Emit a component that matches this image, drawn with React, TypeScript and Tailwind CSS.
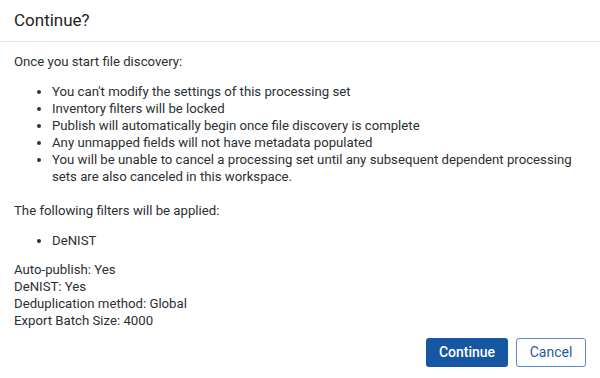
export default function App() {
  const effects = [
    "You can't modify the settings of this processing set",
    'Inventory filters will be locked',
    'Publish will automatically begin once file discovery is complete',
    'Any unmapped fields will not have metadata populated',
    'You will be unable to cancel a processing set until any subsequent dependent processing sets are also canceled in this workspace.',
  ]

  return (
    <div className="flex h-[378px] w-[600px] flex-col bg-white font-['Roboto',sans-serif] text-[#2b2f33]">
      <header className="flex h-[42px] shrink-0 items-center border-b border-[#e3e8ec] px-[14px]">
        <h1 className="text-[17px] leading-none text-[#222]">Continue?</h1>
      </header>

      <div className="flex-1 pl-[14px] pr-[6px] pt-[11px] text-[13.2px] leading-[17px]">
        <p>Once you start file discovery:</p>
        <ul className="mt-[13px] list-disc pl-[38px] marker:text-[#333]">
          {effects.map((item) => (
            <li key={item}>{item}</li>
          ))}
        </ul>
        <p className="mt-[17px]">The following filters will be applied:</p>
        <ul className="mt-[13px] list-disc pl-[38px]">
          <li>DeNIST</li>
        </ul>
        <div className="mt-[12px]">
          <p>Auto-publish: Yes</p>
          <p>DeNIST: Yes</p>
          <p>Deduplication method: Global</p>
          <p>Export Batch Size: 4000</p>
        </div>
      </div>

      <footer className="flex justify-end gap-[8px] pb-[11px] pr-[14px]">
        <button
          type="button"
          className="h-[29px] w-[82px] rounded-[3px] bg-[#1557a3] text-[14px] font-medium text-white"
        >
          Continue
        </button>
        <button
          type="button"
          className="h-[29px] w-[70px] rounded-[3px] border border-[#5a8cc6] bg-white text-[14px] text-[#1f5ea8]"
        >
          Cancel
        </button>
      </footer>
    </div>
  )
}
